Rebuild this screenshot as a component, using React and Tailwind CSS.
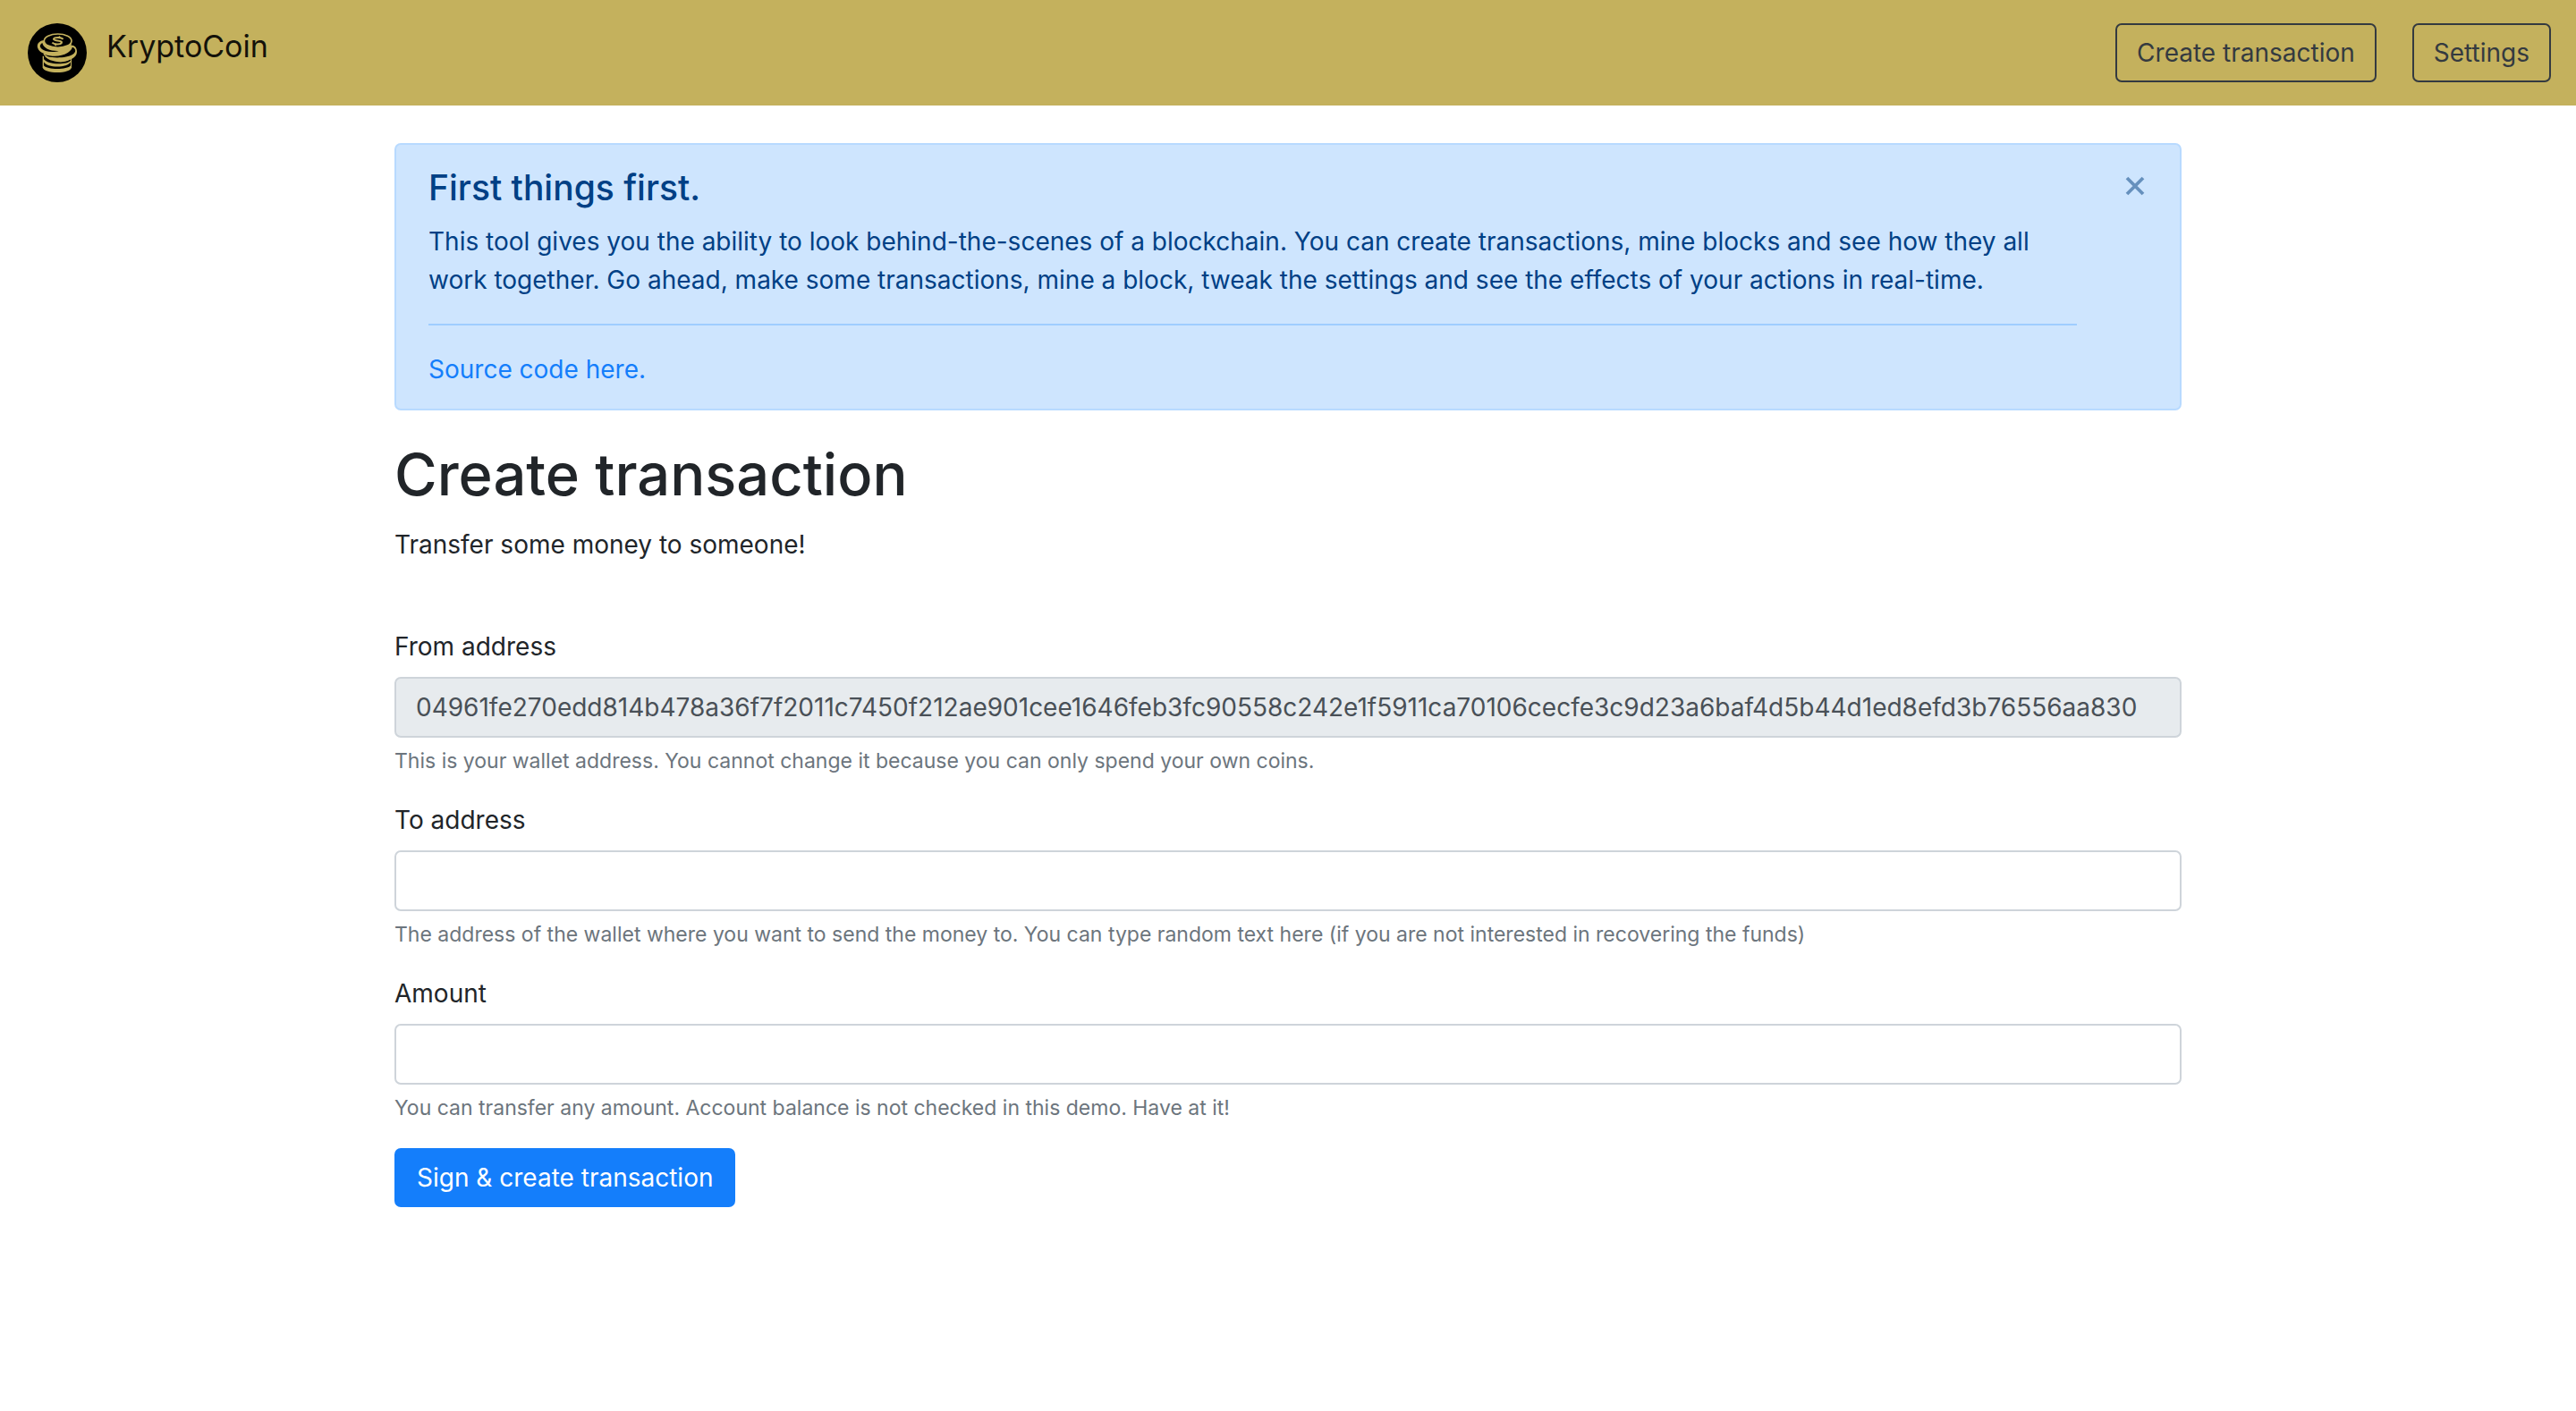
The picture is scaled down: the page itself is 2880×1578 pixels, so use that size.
import { useState } from "react";

const WALLET =
  "04961fe270edd814b478a36f7f2011c7450f212ae901cee1646feb3fc90558c242e1f5911ca70106cecfe3c9d23a6baf4d5b44d1ed8efd3b76556aa830";

function Logo() {
  return (
    <svg viewBox="0 0 198 198" className="size-[66px] shrink-0" aria-hidden="true">
      <circle cx="99" cy="99" r="99" fill="#000" />
      <g fill="#c4b15d">
        <path d="M50 110 V148 C52 171 146 171 147 148 V110 Z" />
        <path d="M54 130 C64 151 134 151 144 130 V142 C132 157 66 157 54 142 Z" fill="#000" />
        <path d="M54 106 C64 130 130 140 144 118 V125 C132 140 66 140 54 120 Z" fill="#000" />
        <path d="M52 102 C66 134 164 138 165 96 C166 82 156 72 142 74 Z" />
        <path d="M56 104 C84 114 112 112 134 99 C146 91 150 82 149 80 C162 84 164 96 150 105 C134 115 92 119 66 111 Z" fill="#000" />
        <path d="M50 58 C34 62 30 74 34 84 C42 108 96 112 124 96 C140 88 148 76 147 59 Z" />
        <path d="M49 66 C36 74 40 86 60 93 C74 97 92 97 104 93 C76 94 52 84 49 66 Z" fill="#000" />
      </g>
      <ellipse cx="101" cy="59" rx="46" ry="23" fill="#000" stroke="#c4b15d" strokeWidth="5" />
      <path
        d="M119 53 C112 47 90 46 87 53 C86 60 116 57 114 65 C109 73 88 71 82 65 M108 44 L104 50 M96 68 L92 75"
        fill="none"
        stroke="#c4b15d"
        strokeWidth="6"
      />
    </svg>
  );
}

function Field({ id, label, help, type = "text", ...rest }) {
  return (
    <div className="mb-7">
      <label htmlFor={id} className="mb-3 block">
        {label}
      </label>
      <input
        id={id}
        type={type}
        aria-describedby={id + "-help"}
        className="block h-[68px] w-full rounded-[7px] border-2 border-[#ced4da] bg-white px-[22px] text-[#495057] disabled:bg-[#e7ebee]"
        {...rest}
      />
      <small id={id + "-help"} className="mt-[9px] block text-[23px] leading-[34px] text-[#6c757d]">
        {help}
      </small>
    </div>
  );
}

export default function App() {
  const [open, setOpen] = useState(true);
  const navButton =
    "h-[66px] rounded-[7px] border-2 border-[#343a40] px-[22px] text-[#343a40]";
  return (
    <div className="min-h-screen bg-white font-['Inter','Liberation_Sans',sans-serif] text-[28px] leading-[43px] text-[#212529]">
      <nav className="flex items-center justify-between bg-[#c4b15d] py-[26px] pr-7 pl-[31px]">
        <a href="#" className="flex items-start gap-[22px] text-[34px] leading-[52px] text-[#14120a]">
          <Logo />
          KryptoCoin
        </a>
        <div className="flex gap-10">
          <button type="button" className={navButton}>Create transaction</button>
          <button type="button" className={navButton}>Settings</button>
        </div>
      </nav>

      <main className="mx-auto mt-[42px] max-w-[1998px]">
        {open && (
          <div
            role="alert"
            className="mb-7 flex items-start rounded-[7px] border-2 border-[#b8daff] bg-[#cee5fe] px-9 py-[22px] text-[#004085]"
          >
            <div className="min-w-0 flex-1">
              <h4 className="mb-[13px] text-[39px] leading-[52px] font-medium">First things first.</h4>
              <p>
                This tool gives you the ability to look behind-the-scenes of a blockchain. You can create
                transactions, mine blocks and see how they all work together. Go ahead, make some transactions,
                mine a block, tweak the settings and see the effects of your actions in real-time.
              </p>
              <hr className="mt-[27px] mb-7 border-t-2 border-[#9fcdff]" />
              <a href="#source" className="text-[#147efb]">Source code here.</a>
            </div>
            <button
              type="button"
              aria-label="Close alert"
              onClick={() => setOpen(false)}
              className="ml-[51px] flex h-12 w-7 items-center justify-center text-[#6690bd]"
            >
              <svg viewBox="0 0 22 22" className="size-[22px]" fill="none" stroke="currentColor" strokeWidth="3.8">
                <path d="M2 2 L20 20 M20 2 L2 20" />
              </svg>
            </button>
          </div>
        )}

        <h1 className="mb-3.5 text-[65px] leading-[87px] font-medium">Create transaction</h1>
        <p className="mb-[71px]">Transfer some money to someone!</p>

        <form onSubmit={(e) => e.preventDefault()}>
          <Field
            id="from"
            label="From address"
            defaultValue={WALLET}
            disabled
            help="This is your wallet address. You cannot change it because you can only spend your own coins."
          />
          <Field
            id="to"
            label="To address"
            help="The address of the wallet where you want to send the money to. You can type random text here (if you are not interested in recovering the funds)"
          />
          <Field
            id="amount"
            label="Amount"
            help="You can transfer any amount. Account balance is not checked in this demo. Have at it!"
          />
          <button type="submit" className="h-[66px] rounded-[7px] bg-[#147efb] px-[25px] text-white">
            Sign &amp; create transaction
          </button>
        </form>
      </main>
    </div>
  );
}
